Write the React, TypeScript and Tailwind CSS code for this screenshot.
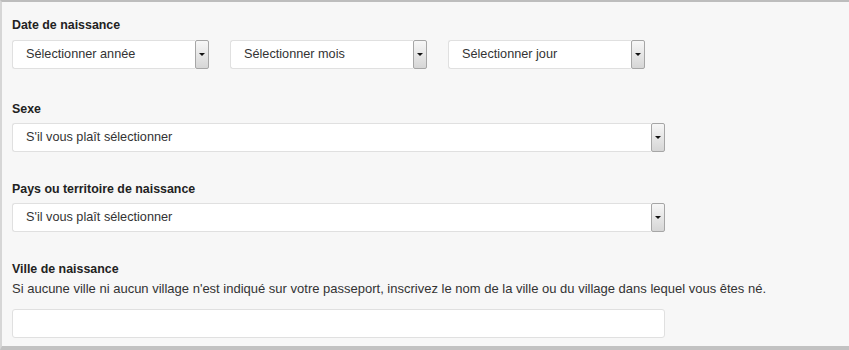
import React from "react";

function Arrow() {
  return (
    <div className="flex h-full w-[14px] shrink-0 items-center justify-center rounded-[2px] border border-[#a6a6a6] bg-gradient-to-b from-[#f7f7f7] to-[#d6d6d6]">
      <div className="h-0 w-0 border-l-[3px] border-r-[3px] border-t-[3px] border-l-transparent border-r-transparent border-t-[#111]" />
    </div>
  );
}

function Select({ label, className }: { label: string; className: string }) {
  return (
    <div className={"flex h-[29px] items-stretch " + className}>
      <div className="flex flex-1 items-center rounded-l-[3px] border border-r-0 border-[#e0e0e0] bg-white pl-[13px] text-[12.7px] text-[#333]">
        {label}
      </div>
      <Arrow />
    </div>
  );
}

export default function App() {
  return (
    <div
      className="h-[350px] w-[849px] overflow-hidden border-t-2 border-l-2 border-b-4 border-t-[#bdbdbd] border-l-[#d6d6d6] border-b-[#c2c2c2] bg-[#f7f7f7] pl-[10px]"
      style={{ fontFamily: '"Liberation Sans", Arial, sans-serif' }}
    >
      <div className="mt-[15px] text-[12.4px] font-bold leading-[16px] text-[#222]">Date de naissance</div>
      <div className="mt-[7px] flex gap-[21px]">
        <Select label="Sélectionner année" className="w-[197px]" />
        <Select label="Sélectionner mois" className="w-[197px]" />
        <Select label="Sélectionner jour" className="w-[197px]" />
      </div>

      <div className="mt-[32px] text-[12.4px] font-bold leading-[16px] text-[#222]">Sexe</div>
      <div className="mt-[6px]">
        <Select label="S'il vous plaît sélectionner" className="w-[653px]" />
      </div>

      <div className="mt-[29px] text-[12.4px] font-bold leading-[16px] text-[#222]">Pays ou territoire de naissance</div>
      <div className="mt-[6px]">
        <Select label="S'il vous plaît sélectionner" className="w-[653px]" />
      </div>

      <div className="mt-[29px] text-[12.4px] font-bold leading-[16px] text-[#222]">Ville de naissance</div>
      <div className="mt-[4px] text-[13px] leading-[16px] text-[#333]">
        Si aucune ville ni aucun village n'est indiqué sur votre passeport, inscrivez le nom de la ville ou du village dans lequel vous êtes né.
      </div>
      <div className="mt-[12px] h-[29px] w-[653px] rounded-[3px] border border-[#e0e0e0] bg-white" />
    </div>
  );
}
